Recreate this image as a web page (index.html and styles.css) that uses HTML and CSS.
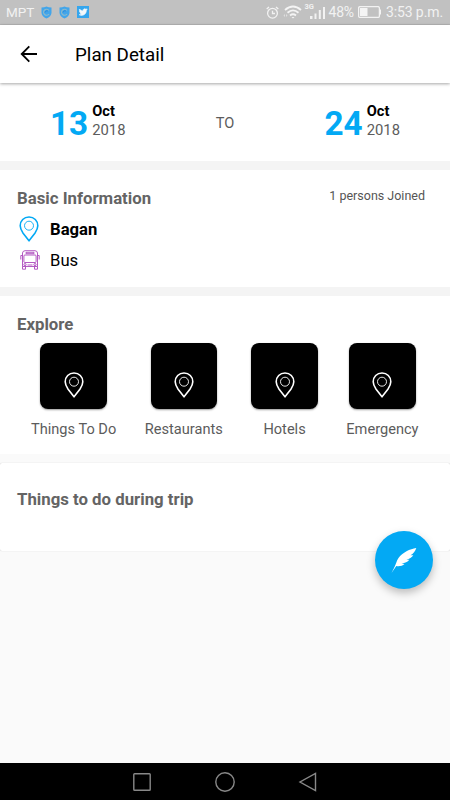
FILE: index.html
```html
<!DOCTYPE html>
<html lang="en">
<head>
    <meta charset="UTF-8">
    <meta name="viewport" content="width=device-width, initial-scale=1.0">
    <title>Plan Detail</title>
    <link rel="stylesheet" href="styles.css">
</head>
<body>
    <svg class="symbols">
        <symbol id="pin" viewBox="0 0 20 26">
            <path d="M10 1C4.900 1 1.200 4.800 1.200 9.700c0 2.800 1.200 5 2.900 7.500L10 24.800l5.900-7.600c1.700-2.500 2.900-4.700 2.900-7.500C18.800 4.800 15.100 1 10 1z" fill="none" stroke="currentColor" stroke-width="1.600" stroke-linejoin="round"/>
            <circle cx="10" cy="9.700" r="4.500" fill="none" stroke="currentColor" stroke-width="0.900"/>
        </symbol>
        <symbol id="shield" viewBox="0 0 11 13">
            <path d="M0.500 1.500Q3.500 1.500 5.500 0.500Q7.500 1.500 10.500 1.500V7Q10 10.500 5.500 12.500Q1 10.500 0.500 7z" fill="#42a5ea"/>
            <path d="M8 4.500A3 3 0 1 0 8 8" fill="none" stroke="#8fb9c9" stroke-width="1.100"/>
            <path d="M6.800 5A2 2 0 0 0 4 6.500" fill="none" stroke="#2b82d2" stroke-width="0.800"/>
        </symbol>
    </svg>

    <div class="status-bar">
        <div class="status-left">
            <span>MPT</span>
            <svg class="shield" width="11" height="13"><use href="#shield"/></svg>
            <svg class="shield" width="11" height="13"><use href="#shield"/></svg>
            <svg width="12" height="12" viewBox="0 0 24 24">
                <rect width="24" height="24" fill="#35a6ee"/>
                <path d="M20.500 7c-.6.300-1.200.500-2 .6.700-.4 1.200-1.100 1.500-1.900-.6.400-1.400.7-2.100.8a3.400 3.400 0 0 0-5.800 3.100C9.300 9.500 6.800 8.100 5.100 6c-.9 1.600-.4 3.500 1.100 4.500-.6 0-1.100-.2-1.500-.4 0 1.600 1.100 3 2.700 3.400-.5.100-1 .1-1.500 0 .4 1.400 1.700 2.300 3.200 2.400A6.800 6.800 0 0 1 4 17.300C10.600 21.400 18.800 17.100 18.800 9.200v-.4c.7-.5 1.300-1.100 1.700-1.800z" fill="#f4f8fa" stroke="#f4f8fa"/>
            </svg>
        </div>
        <div class="status-right">
            <svg class="alarm" width="13" height="13" viewBox="0 0 13 13" fill="none" stroke="#f2f2f2">
                <circle cx="6.500" cy="7.200" r="4.900" stroke-width="1.300"/>
                <path d="M6.500 4.700V7.500H9M0.700 3L3 0.900M12.300 3L10 0.900" stroke-width="1.300"/>
            </svg>
            <svg class="wifi" width="19" height="14" viewBox="0 0 19 14" fill="none" stroke="#f4f4f4" stroke-width="1.800">
                <path d="M2 5Q10 -2 18 5M4.500 7.800Q10 3 15.500 7.800M7 10.500Q10 8 13 10.500"/>
                <path d="M8.500 12H11.500L10 13.500z" fill="#f4f4f4" stroke="none"/>
                <path d="M0.500 10.500L2 9V12zM3 9L4.500 10.500 3 12z" fill="#dedede" stroke="none"/>
            </svg>
            <div class="signal">
                <span>3G</span>
                <svg width="16" height="13" viewBox="0 0 16 13" fill="#f2f2f2">
                    <path d="M0 10h2.500v3H0zM4.500 7.500h2V13h-2zM8.800 4h2v9h-2zM13 1h2v12h-2z"/>
                </svg>
            </div>
            <span class="percent">48%</span>
            <svg class="battery" width="24" height="12" viewBox="0 0 24 12">
                <rect x="0.600" y="0.600" width="20.800" height="10.800" rx="1.500" fill="none" stroke="#f2f2f2" stroke-width="1.300"/>
                <path d="M2 2h7.500v8H2zM22 3.500h1v5h-1z" fill="#f4f4f4"/>
            </svg>
            <span class="time">3:53 p.m.</span>
        </div>
    </div>

    <header class="app-bar">
        <svg width="18" height="18" viewBox="0 0 18 18" fill="none" stroke="#000" stroke-width="1.800">
            <path d="M17 9H2M9.300 1.300L1.700 9l7.600 7.700"/>
        </svg>
        <h1>Plan Detail</h1>
    </header>

    <main>
        <section class="dates">
            <div class="date">
                <span class="day">13</span>
                <div>
                    <p class="month">Oct</p>
                    <p class="year">2018</p>
                </div>
            </div>
            <span class="to">TO</span>
            <div class="date">
                <span class="day">24</span>
                <div>
                    <p class="month">Oct</p>
                    <p class="year">2018</p>
                </div>
            </div>
        </section>

        <section class="basic">
            <div class="basic-head">
                <h2>Basic Information</h2>
                <span class="joined">1 persons Joined</span>
            </div>
            <div class="info-row place">
                <svg width="20" height="26"><use href="#pin"/></svg>
                <span>Bagan</span>
            </div>
            <div class="info-row bus">
                <svg width="20" height="20" viewBox="0 0 20 20" fill="none" stroke="#ab47bc" stroke-width="0.900">
                    <path d="M2.500 16.500V3Q2.500 1 5 0.700H15Q17.500 1 17.500 3V16.500zM6 2.300h8v1.400H6z"/>
                    <rect x="3.900" y="5" width="12.200" height="7.500" rx="1"/>
                    <path d="M2.500 5.500H0.800V9.500M17.500 5.500H19.200V9.500M7.500 15h5M2.500 16.500v2.700h3v-2.700M14.500 16.500v2.700h3v-2.700"/>
                    <circle cx="5" cy="14.600" r="1.100"/>
                    <circle cx="15" cy="14.600" r="1.100"/>
                </svg>
                <span>Bus</span>
            </div>
        </section>

        <section class="explore">
            <h2>Explore</h2>
            <div class="tiles">
                <div class="tile">
                    <div class="tile-box"><svg width="20" height="26"><use href="#pin"/></svg></div>
                    <p>Things To Do</p>
                </div>
                <div class="tile">
                    <div class="tile-box"><svg width="20" height="26"><use href="#pin"/></svg></div>
                    <p>Restaurants</p>
                </div>
                <div class="tile">
                    <div class="tile-box"><svg width="20" height="26"><use href="#pin"/></svg></div>
                    <p>Hotels</p>
                </div>
                <div class="tile">
                    <div class="tile-box"><svg width="20" height="26"><use href="#pin"/></svg></div>
                    <p>Emergency</p>
                </div>
            </div>
        </section>

        <section class="trip">
            <h2>Things to do during trip</h2>
        </section>
    </main>

    <button class="fab" aria-label="Write">
        <svg width="28" height="28" viewBox="0 0 28 28">
            <path d="M26.300 2C20 2.800 12.500 6.500 8.500 12C6.300 15 6.300 17.700 4.500 21L1.500 27L6.300 20C9 20.500 12.500 20 14.500 18L11.500 17.600C15 17.200 17.800 16 19.300 13.800L16.300 13.700C19.500 12.900 21.800 11.400 23.300 9.200L20.500 9.300C23.300 7.900 25.300 5.300 26.300 2z" fill="#fff"/>
        </svg>
    </button>

    <nav class="nav-bar">
        <svg width="20" height="20" viewBox="0 0 20 20"><rect x="1.800" y="1.800" width="16.400" height="16.400" rx="0.800"/></svg>
        <svg width="20" height="20" viewBox="0 0 20 20"><circle cx="10" cy="10" r="9.200"/></svg>
        <svg width="20" height="20" viewBox="0 0 20 20"><path d="M17.500 1.500V18.500L2 10z"/></svg>
    </nav>
</body>
</html>
```
FILE: styles.css
```css
* {
    margin: 0;
    padding: 0;
    box-sizing: border-box;
}

body {
    display: flex;
    flex-direction: column;
    height: 800px;
    font-family: Roboto, sans-serif;
    background-color: #fafafa;
    color: #000;
    overflow: hidden;
}

svg {
    display: block;
    flex-shrink: 0;
}

.symbols {
    position: absolute;
    width: 0;
    height: 0;
}

/* Status bar */
.status-bar {
    display: flex;
    justify-content: space-between;
    height: 25px;
    padding: 0 7px 0 6px;
    background-color: #c1c1c1;
    border-bottom: 1px solid #b5b5b5;
    color: #f2f2f2;
    font-size: 14px;
    line-height: 28px;
}

.status-left,
.status-right {
    display: flex;
    align-items: center;
}

.status-left span {
    font-size: 13.5px;
}

.status-left .shield {
    margin-left: 7px;
}

.status-left .shield + svg {
    margin-left: 7px;
}

.wifi {
    margin-left: 4px;
}

.signal {
    display: flex;
    align-items: flex-start;
    margin-left: 3px;
}

.signal span {
    font-size: 7.5px;
    font-weight: bold;
    line-height: 8px;
    width: 5px;
    margin-top: -3px;
}

.percent {
    margin-left: 3px;
    letter-spacing: -0.2px;
}

.battery {
    margin-left: 4px;
}

.time {
    margin-left: 4px;
    letter-spacing: -0.1px;
}

/* App bar */
.app-bar {
    display: flex;
    align-items: center;
    height: 58px;
    padding-left: 20px;
    background-color: #fff;
    box-shadow: 0 1px 3px rgba(0, 0, 0, 0.35);
    z-index: 1;
}

.app-bar h1 {
    margin: 2px 0 0 37px;
    font-size: 18.75px;
    font-weight: normal;
}

main {
    flex: 1;
}

section {
    background-color: #fff;
}

h2 {
    color: #646464;
    font-size: 16.8px;
    font-weight: bold;
    line-height: 20px;
}

/* Dates */
.dates {
    display: flex;
    justify-content: space-between;
    height: 87px;
    padding: 18px 50px 0;
    border-bottom: 9px solid #f4f4f4;
}

.date {
    display: flex;
}

.day {
    color: #03a9f4;
    font-size: 33.3px;
    font-weight: bold;
    line-height: 46px;
    margin-right: 4px;
}

.month,
.year {
    font-size: 14.6px;
    line-height: 19px;
}

.month {
    padding-top: 1px;
    font-weight: bold;
}

.year,
.to {
    color: #5c5c5c;
}

.year {
    font-size: 14.8px;
}

.to {
    font-size: 14.6px;
    line-height: 44px;
}

/* Basic information */
.basic {
    height: 126px;
    padding: 18px 25px 0 17px;
    border-bottom: 9px solid #f4f4f4;
}

.basic-head {
    display: flex;
    justify-content: space-between;
}

.joined {
    color: #555;
    font-size: 12.5px;
    line-height: 15px;
}

.info-row {
    display: flex;
    align-items: center;
    padding-left: 2px;
    font-size: 16.67px;
}

.place {
    height: 26px;
    margin-top: 8px;
    color: #03a9f4;
}

.place span {
    color: #000;
    font-weight: bold;
}

.info-row span {
    margin-left: 11px;
}

.bus {
    height: 20px;
    margin-top: 8px;
}

.bus svg {
    margin: 0 -1px 0 1px;
}

/* Explore */
.explore {
    height: 158px;
    padding: 18px 17px 0;
}

.tiles {
    display: flex;
    justify-content: space-between;
    padding: 9px 14.5px 0 14px;
}

.tile {
    display: flex;
    flex-direction: column;
    align-items: center;
}

.tile-box {
    display: flex;
    justify-content: center;
    width: 66.5px;
    height: 66px;
    padding-top: 29px;
    border-radius: 8px;
    background-color: #000;
    box-shadow: 0 1px 2px rgba(0, 0, 0, 0.4);
    color: #fff;
}

.tile p {
    margin-top: 10px;
    color: #5c5c5c;
    font-size: 14.6px;
    line-height: 20px;
}

/* Trip list */
.trip {
    height: 88px;
    margin-top: 9px;
    padding: 26px 17px 0;
    border-radius: 2px;
    box-shadow: 0 0 1px rgba(0, 0, 0, 0.25);
}

/* Floating button */
.fab {
    position: absolute;
    left: 375px;
    top: 531px;
    display: flex;
    align-items: center;
    justify-content: center;
    width: 58px;
    height: 58px;
    border: none;
    border-radius: 50%;
    background-color: #03a9f4;
    box-shadow: 0 4px 8px rgba(0, 0, 0, 0.25);
}

/* Navigation bar */
.nav-bar {
    display: flex;
    justify-content: center;
    align-items: center;
    gap: 63px;
    height: 37px;
    background-color: #000;
    fill: none;
    stroke: #888;
    stroke-width: 1.4;
}
```
